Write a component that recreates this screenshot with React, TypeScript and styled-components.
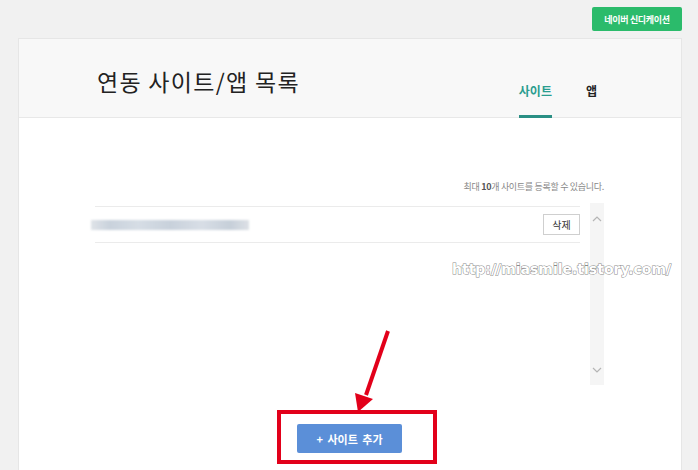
import styled, { createGlobalStyle } from "styled-components";

const GlobalStyle = createGlobalStyle`
  html, body {
    margin: 0;
    padding: 0;
    background: #f1f1f1;
    font-family: "Noto Sans CJK KR", "Noto Sans", sans-serif;
    overflow: hidden;
  }
`;

const Page = styled.div`
  width: 698px;
  height: 470px;
  position: relative;
  overflow: hidden;
`;

const TopBar = styled.div`
  display: flex;
  justify-content: flex-end;
  padding: 7px 16px 0 0;
`;

const SyndicationButton = styled.button`
  width: 90px;
  height: 24px;
  border: none;
  border-radius: 2px;
  background: #2bbb6b;
  color: #fff;
  font-family: inherit;
  font-size: 9px;
  font-weight: 700;
  letter-spacing: -0.3px;
  padding: 0;
`;

const Card = styled.div`
  position: relative;
  margin: 7px 0 0 18px;
  width: 664px;
  height: 460px;
  background: #fff;
  border: 1px solid #e6e6e6;
  box-sizing: border-box;
`;

const CardHeader = styled.div`
  display: flex;
  height: 78px;
  padding: 0 84px 0 78px;
  background: #f8f8f8;
  border-bottom: 1px solid #e8e8e8;
`;

const Title = styled.h1`
  margin: 26px 0 0;
  font-size: 23px;
  font-weight: 400;
  color: #222;
  line-height: 32px;
  letter-spacing: 1.3px;
`;

const Tabs = styled.div`
  display: flex;
  gap: 34px;
  margin-left: auto;
  align-self: flex-end;
  margin-bottom: -1px;
`;

const Tab = styled.div<{ active?: boolean }>`
  font-size: 12px;
  font-weight: 700;
  line-height: 16px;
  padding-bottom: 16px;
  color: ${(p) => (p.active ? "#2a9d8f" : "#222")};
  border-bottom: 3px solid ${(p) => (p.active ? "#2a8f84" : "transparent")};
`;

const CardBody = styled.div`
  padding: 62px 77px 0 76px;
`;

const Notice = styled.p`
  margin: 0;
  text-align: right;
  font-size: 9px;
  line-height: 14px;
  color: #888;
  letter-spacing: -0.3px;

  b {
    color: #555;
  }
`;

const ListRow = styled.div`
  display: flex;
  margin-top: 9px;
`;

const SiteList = styled.div`
  flex: 1;
  margin-top: 3px;
  height: 35px;
  border-top: 1px solid #ebebeb;
  border-bottom: 1px solid #ebebeb;
  display: flex;
  align-items: center;
  justify-content: space-between;
`;

const BlurredUrl = styled.div`
  width: 158px;
  height: 10px;
  margin-left: -4px;
  background: linear-gradient(
    90deg,
    #dfe3e8 0%,
    #c9d2dc 12%,
    #d6dde5 30%,
    #c8d1db 50%,
    #d8dee6 70%,
    #c6cfd9 88%,
    #dde1e6 100%
  );
  filter: blur(1.2px);
`;

const DeleteButton = styled.button`
  width: 37px;
  height: 21px;
  padding: 0;
  background: #fff;
  border: 1px solid #cfcfcf;
  font-family: inherit;
  font-size: 10px;
  color: #333;
`;

const ScrollTrack = styled.div`
  width: 14px;
  height: 182px;
  margin-left: 10px;
  background: #f5f5f5;
  display: flex;
  flex-direction: column;
  align-items: center;
  justify-content: space-between;
  padding: 13px 0 12px;
  box-sizing: border-box;
`;

const ButtonArea = styled.div`
  display: flex;
  justify-content: center;
  margin-top: 39px;
`;

const AddButton = styled.button`
  width: 105px;
  height: 29px;
  border: none;
  border-radius: 2px;
  background: #5b8fd8;
  color: #fff;
  font-family: inherit;
  font-size: 11px;
  font-weight: 700;
  word-spacing: 2px;
  padding: 0;
`;

const Highlight = styled.div`
  position: absolute;
  left: 258px;
  top: 371px;
  width: 160px;
  height: 54px;
  border: 4px solid #e2001a;
  box-sizing: border-box;
`;

const Arrow = styled.svg`
  position: absolute;
  left: 0;
  top: 0;
  pointer-events: none;
`;

const Watermark = styled.div`
  position: absolute;
  left: 452px;
  top: 261px;
  font-family: "DejaVu Sans", sans-serif;
  font-weight: 700;
  font-size: 14px;
  color: #fff;
  -webkit-text-stroke: 1px #8a8a8a;
  paint-order: stroke fill;
`;

const Chevron = ({ up }: { up?: boolean }) => (
  <svg width="10" height="6" viewBox="0 0 10 6">
    <path
      d={up ? "M1 5 L5 1 L9 5" : "M1 1 L5 5 L9 1"}
      fill="none"
      stroke="#b5b5b5"
      strokeWidth="1.2"
    />
  </svg>
);

export default function App() {
  return (
    <Page>
      <GlobalStyle />
      <TopBar>
        <SyndicationButton>네이버 신디케이션</SyndicationButton>
      </TopBar>
      <Card>
        <CardHeader>
          <Title>연동 사이트/앱 목록</Title>
          <Tabs>
            <Tab active>사이트</Tab>
            <Tab>앱</Tab>
          </Tabs>
        </CardHeader>
        <CardBody>
          <Notice>
            최대 <b>10</b>개 사이트를 등록할 수 있습니다.
          </Notice>
          <ListRow>
            <SiteList>
              <BlurredUrl />
              <DeleteButton>삭제</DeleteButton>
            </SiteList>
            <ScrollTrack>
              <Chevron up />
              <Chevron />
            </ScrollTrack>
          </ListRow>
          <ButtonArea>
            <AddButton>+ 사이트 추가</AddButton>
          </ButtonArea>
        </CardBody>
        <Highlight />
      </Card>
      <Watermark>http://miasmile.tistory.com/</Watermark>
      <Arrow width="698" height="470" viewBox="0 0 698 470">
        <line x1="388" y1="331" x2="366" y2="395" stroke="#e2001a" strokeWidth="4" />
        <polygon points="358,412 355,393 373,399" fill="#e2001a" />
      </Arrow>
    </Page>
  );
}
